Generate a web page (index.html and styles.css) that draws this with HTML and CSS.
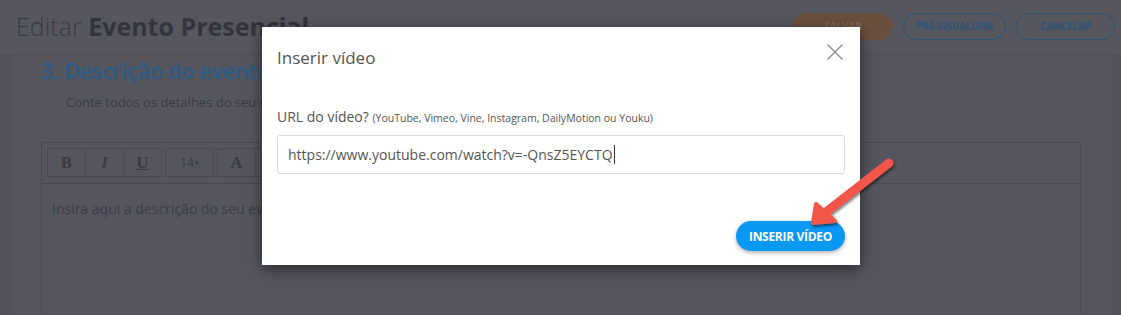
FILE: index.html
```html
<!DOCTYPE html>
<html lang="pt-BR">
<head>
<meta charset="utf-8">
<title>Editar Evento Presencial</title>
<link rel="stylesheet" href="styles.css">
</head>
<body>
<header class="topbar">
  <h1 class="page-title"><span class="light">Editar</span> <strong>Evento Presencial</strong></h1>
  <div class="actions">
    <button class="btn btn-save">SALVAR</button>
    <button class="btn btn-outline">PRÉ-VISUALIZAR</button>
    <button class="btn btn-outline">CANCELAR</button>
  </div>
</header>

<main class="card">
  <h2 class="section-title">3. Descrição do evento</h2>
  <p class="section-sub">Conte todos os detalhes do seu evento, como a programação e os diferenciais da sua produção!</p>
  <div class="editor">
    <div class="toolbar">
      <div class="tgroup">
        <span class="tbtn bold">B</span><span class="tbtn ital">I</span><span class="tbtn under">U</span>
      </div>
      <div class="tgroup">
        <span class="tbtn size">14<small>▾</small></span>
      </div>
      <div class="tgroup">
        <span class="tbtn bold">A</span><span class="tbtn bold">≡</span>
      </div>
    </div>
    <div class="editor-body">Insira aqui a descrição do seu evento...</div>
  </div>
</main>

<div class="modal">
  <div class="modal-header">
    <h3 class="modal-title">Inserir vídeo</h3>
    <span class="close" aria-label="Fechar">
      <svg width="16" height="16" viewBox="0 0 16 16"><path d="M0.5 0.5 L15.5 15.5 M15.5 0.5 L0.5 15.5" stroke="#8a8a8a" stroke-width="1.3" fill="none"/></svg>
    </span>
  </div>
  <label class="field-label">URL do vídeo? <small>(YouTube, Vimeo, Vine, Instagram, DailyMotion ou Youku)</small></label>
  <div class="input">https://www.youtube.com/watch?v=-QnsZ5EYCTQ<span class="caret"></span></div>
  <div class="modal-footer">
    <button class="btn-primary">INSERIR VÍDEO</button>
  </div>
</div>

<svg class="arrow" width="1121" height="315" viewBox="0 0 1121 315">
  <defs>
    <filter id="sh" x="-20%" y="-20%" width="140%" height="140%">
      <feDropShadow dx="1" dy="2" stdDeviation="1.6" flood-color="#000" flood-opacity="0.55"/>
    </filter>
  </defs>
  <g filter="url(#sh)" fill="#f2574a" stroke="#f2574a" stroke-linecap="round" stroke-linejoin="round">
    <line x1="889" y1="163" x2="826" y2="212" stroke-width="9"/>
    <polygon points="813,223 816,204 835,221" stroke-width="4"/>
  </g>
</svg>
</body>
</html>
```

FILE: styles.css
```css
* { box-sizing: border-box; }

html, body { margin: 0; padding: 0; }

body {
  width: 1121px;
  height: 315px;
  overflow: hidden;
  background: #515159;
  font-family: "Open Sans", "Liberation Sans", sans-serif;
  position: relative;
}

.topbar {
  height: 55px;
  background: #56565f;
  border-bottom: 1px solid #4e4e56;
  display: flex;
  align-items: center;
  justify-content: space-between;
  padding: 0 6px 0 16px;
}

.page-title {
  margin: 0;
  font-size: 25px;
  line-height: 30px;
  font-weight: 300;
  color: #3a3a43;
  margin-top: -2px;
}

.page-title strong { font-weight: 700; color: #34343c; }

.actions { display: flex; gap: 10px; margin-top: -2px; }

.btn {
  height: 27px;
  border-radius: 14px;
  font-family: "Open Sans", sans-serif;
  font-weight: 700;
  font-size: 10px;
  letter-spacing: -0.2px;
  padding: 0;
  background: transparent;
}

.btn-save {
  width: 100px;
  background: #6b4f3d;
  border: 1px solid #6b4f3d;
  color: #7c675a;
}

.btn-outline {
  width: 103px;
  border: 1px solid #2b5377;
  color: #2d5579;
}

.actions .btn-outline:last-child { width: 99px; }

.card {
  margin: 0 10px 0 12px;
  background: #55555e;
  height: 260px;
  padding: 1px 30px 0 29px;
}

.section-title {
  margin: 0;
  font-size: 21px;
  line-height: 30px;
  font-weight: 600;
  color: #2c5b86;
}

.section-sub {
  margin: 7px 0 0 25px;
  font-size: 13px;
  line-height: 18px;
  color: #3b3b43;
}

.editor {
  margin-top: 31px;
  border: 1px solid #49494f;
  border-bottom: none;
  height: 172px;
}

.toolbar {
  display: flex;
  gap: 3px;
  padding: 5px 0 5px 5px;
  border-bottom: 1px solid #49494f;
  height: 41px;
}

.tgroup { display: flex; }

.tbtn {
  width: 39px;
  height: 29px;
  border: 1px solid #4a4a51;
  margin-left: -1px;
  display: flex;
  align-items: center;
  justify-content: center;
  font-family: "Liberation Serif", serif;
  font-size: 17px;
  color: #39393f;
}

.tgroup .tbtn:first-child { margin-left: 0; }

.tbtn.bold { font-weight: 700; }
.tbtn.ital { font-style: italic; font-weight: 700; }
.tbtn.under { text-decoration: underline; font-weight: 700; }
.tbtn.size {
  width: 49px;
  font-family: "Open Sans", sans-serif;
  font-size: 12px;
}
.tbtn.size small { font-size: 7px; margin-left: 1px; }

.editor-body {
  padding: 15px 10px;
  font-size: 14px;
  line-height: 20px;
  color: #3d3d45;
}

/* modal overlay */
.modal {
  position: absolute;
  left: 262px;
  top: 27px;
  width: 598px;
  height: 238px;
  background: #fff;
  box-shadow: 0 4px 14px rgba(0, 0, 0, 0.55);
  padding: 0 15px;
  display: flex;
  flex-direction: column;
}

.modal-header {
  height: 80px;
  display: flex;
  justify-content: space-between;
  align-items: flex-start;
}

.modal-title {
  margin: 19px 0 0;
  font-size: 17px;
  line-height: 24px;
  font-weight: 400;
  color: #555;
}

.close {
  margin-top: 17px;
  margin-right: 2px;
  width: 16px;
  height: 16px;
  display: block;
}

.close svg { display: block; }

.field-label {
  font-size: 14px;
  line-height: 20px;
  color: #555;
}

.field-label small { font-size: 10.5px; }

.input {
  margin-top: 7px;
  height: 39px;
  border: 1px solid #d9d9d9;
  border-radius: 3px;
  padding: 0 10px;
  display: flex;
  align-items: center;
  font-size: 14px;
  color: #555;
}

.caret {
  display: inline-block;
  width: 1px;
  height: 19px;
  background: #333;
  margin-left: 1px;
}

.modal-footer {
  margin-top: 47px;
  display: flex;
  justify-content: flex-end;
}

.btn-primary {
  height: 30px;
  width: 109px;
  border: none;
  border-radius: 15px;
  background: #0a98f5;
  color: #fff;
  font-family: "Open Sans", sans-serif;
  font-weight: 700;
  font-size: 12px;
  letter-spacing: -0.3px;
  box-shadow: 0 2px 4px rgba(0, 0, 0, 0.3);
  padding: 0;
}

.arrow {
  position: absolute;
  left: 0;
  top: 0;
  pointer-events: none;
}
```
